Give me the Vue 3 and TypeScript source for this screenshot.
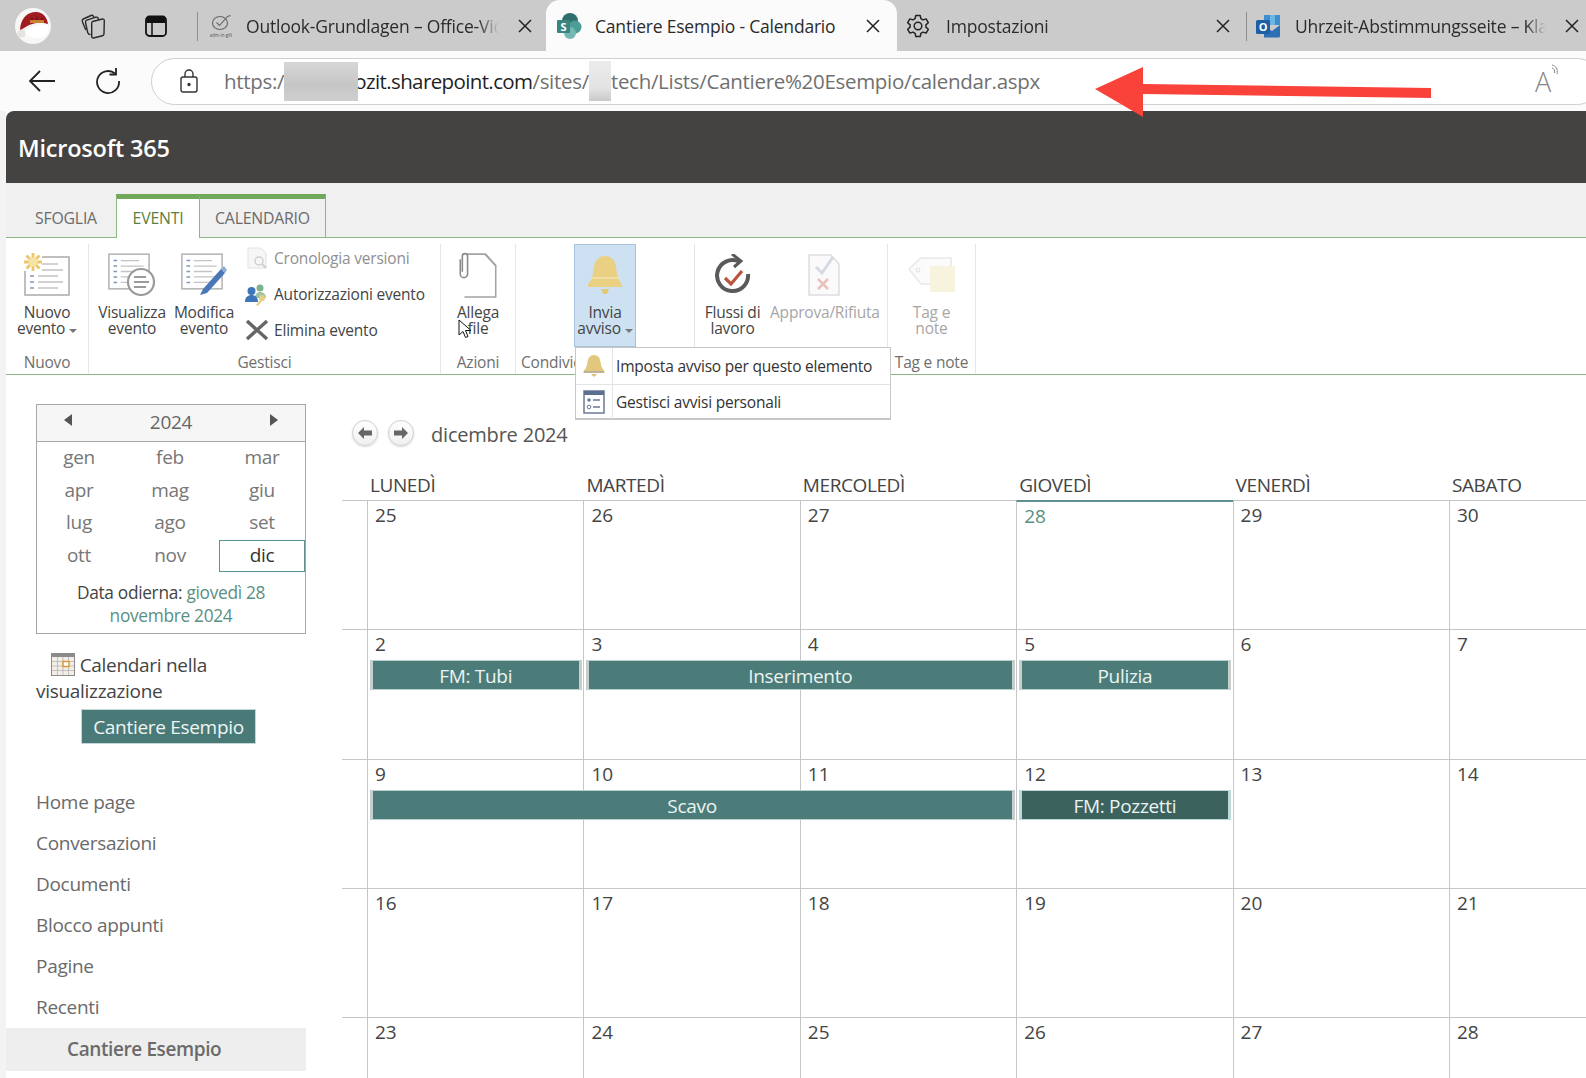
<script setup lang="ts">
interface CalEvent {
  title: string;
  from: number;
  to: number;
  dark?: boolean;
}

interface Week {
  days: number[];
  events: CalEvent[];
}

const months = ["gen", "feb", "mar", "apr", "mag", "giu", "lug", "ago", "set", "ott", "nov", "dic"];
const dayNames = ["LUNEDÌ", "MARTEDÌ", "MERCOLEDÌ", "GIOVEDÌ", "VENERDÌ", "SABATO"];
const navLinks = ["Home page", "Conversazioni", "Documenti", "Blocco appunti", "Pagine", "Recenti"];

const weeks: Week[] = [
  { days: [25, 26, 27, 28, 29, 30], events: [] },
  {
    days: [2, 3, 4, 5, 6, 7],
    events: [
      { title: "FM: Tubi", from: 1, to: 2 },
      { title: "Inserimento", from: 2, to: 4 },
      { title: "Pulizia", from: 4, to: 5 },
    ],
  },
  {
    days: [9, 10, 11, 12, 13, 14],
    events: [
      { title: "Scavo", from: 1, to: 4 },
      { title: "FM: Pozzetti", from: 4, to: 5, dark: true },
    ],
  },
  { days: [16, 17, 18, 19, 20, 21], events: [] },
  { days: [23, 24, 25, 26, 27, 28], events: [] },
];
</script>

<template>
  <div class="page">
    <svg class="defs" width="0" height="0">
      <symbol id="listdoc" viewBox="0 0 46 40">
        <rect x="1" y="1" width="44" height="38" fill="#fff" stroke="#b0b0b0" stroke-width="1.6" />
        <g stroke="#c4c4c4" stroke-width="1.4">
          <path d="M14 8h20M14 14h25M14 20h20M14 26h25M14 32h20" />
        </g>
        <g stroke="#7f98b8" stroke-width="1.6">
          <path d="M6 8h4M6 14h4M6 20h4M6 26h4M6 32h4" />
        </g>
      </symbol>
    </svg>

    <!-- browser chrome -->
    <div class="tabstrip">
      <div class="strip-left">
        <svg class="avatar" width="36" height="36" viewBox="0 0 36 36">
          <circle cx="18" cy="18" r="18" fill="#f9f7f6" />
          <path d="M5 23C5 11 12 4 21 4c7 0 11 5 12 12-9-3-19-1-28 7z" fill="#a01c20" />
          <path d="M15 12h14v3H15z" fill="#c9822e" />
          <path d="M17 9l2 3h-4zM22 8l2 4h-4zM27 9l2 3h-4z" fill="#7d1417" />
          <path d="M9 24c5-5 15-8 24-7 2 7-2 13-9 13-7 0-12-2-15-6z" fill="#fff" />
          <circle cx="6.500" cy="25.500" r="4" fill="#e6e2e0" />
        </svg>
        <svg class="chrome-ic" width="26" height="26" viewBox="0 0 26 26" fill="none" stroke="#2a2a2a" stroke-width="1.400" stroke-linejoin="round">
          <path d="M12.500 8.500l10-2.500a1.500 1.500 0 0 1 1.800 1.300l-.3 13.500a2 2 0 0 1-1.500 1.900l-9 2.300a1.500 1.500 0 0 1-1.800-1.400V10.500a2 2 0 0 1 .8-2z" />
          <path d="M10.500 21.500c-1 0-2.500-1-2.800-2L5.500 9.500a2 2 0 0 1 1.300-2.300l9-3a2 2 0 0 1 2.300 1l.7 1.600" />
          <path d="M5.800 17L2.300 8.500a2 2 0 0 1 1-2.500l7.700-3.500a2 2 0 0 1 2.500.8l.5 1" />
        </svg>
        <svg class="chrome-ic tabs-ic" width="24" height="24" viewBox="0 0 24 24" fill="none" stroke="#111" stroke-width="1.800">
          <rect x="2" y="2.500" width="20" height="19.500" rx="3.500" />
          <path d="M2.500 6h19" stroke-width="6" />
          <path d="M8 8v13.500" stroke-width="1.500" />
        </svg>
      </div>

      <div class="tab tab-first">
        <svg width="22" height="28" viewBox="0 0 22 28" fill="none" stroke="#666" stroke-width="1.100">
          <ellipse cx="10" cy="11" rx="7.500" ry="6.500" />
          <path d="M6.500 10.500l3 3 8-9 3-1" />
          <text x="11" y="24.500" text-anchor="middle" class="fav-tiny">adm-in-gift</text>
        </svg>
        <span class="tab-title">Outlook-Grundlagen – Office-Video</span>
        <svg class="tab-x" width="14" height="14" viewBox="0 0 14 14" stroke="#222" stroke-width="1.500"><path d="M1 1l12 12M13 1L1 13" /></svg>
      </div>
      <div class="tab tab-active">
        <svg width="28" height="28" viewBox="0 0 28 28">
          <circle cx="15" cy="9" r="8" fill="#2f6f6d" />
          <circle cx="20" cy="15" r="6.500" fill="#4c9c97" />
          <circle cx="15" cy="21" r="6" fill="#74b8b3" />
          <rect x="2" y="8" width="13" height="13" rx="1" fill="#3a8580" />
          <text x="8.500" y="18.500" text-anchor="middle" class="fav-letter">S</text>
        </svg>
        <span class="tab-title tab-title-full">Cantiere Esempio - Calendario</span>
        <svg class="tab-x" width="14" height="14" viewBox="0 0 14 14" stroke="#222" stroke-width="1.500"><path d="M1 1l12 12M13 1L1 13" /></svg>
      </div>
      <div class="tab tab-settings">
        <svg width="26" height="26" viewBox="0 0 26 26" fill="none" stroke="#222" stroke-width="1.500">
          <circle cx="13" cy="13" r="3.800" />
          <path d="M10.800 2.500h4.400l.7 3.200 2.100 1.200 3.100-1 2.200 3.800-2.400 2.200v2.200l2.400 2.200-2.200 3.800-3.100-1-2.100 1.200-.7 3.200h-4.400l-.7-3.200-2.100-1.200-3.100 1-2.200-3.800 2.400-2.200v-2.200L2.700 9.700l2.200-3.800 3.100 1 2.100-1.200z" stroke-linejoin="round" />
        </svg>
        <span class="tab-title">Impostazioni</span>
        <svg class="tab-x" width="14" height="14" viewBox="0 0 14 14" stroke="#222" stroke-width="1.500"><path d="M1 1l12 12M13 1L1 13" /></svg>
      </div>
      <div class="tab tab-last">
        <svg width="26" height="28" viewBox="0 0 26 28">
          <path d="M9 3h16v10H9z" fill="#3f8fd0" />
          <path d="M15 3h5v10h-5z" fill="#6cb6e6" />
          <path d="M9 14l8 5 8-6v11a1.500 1.500 0 0 1-1.500 1.500H9z" fill="#2f6fb4" />
          <rect x="1" y="8" width="14" height="14" rx="1.500" fill="#1c5fa5" />
          <text x="8" y="19" text-anchor="middle" class="fav-letter">O</text>
        </svg>
        <span class="tab-title">Uhrzeit-Abstimmungsseite – Klassenbuch</span>
        <svg class="tab-x" width="14" height="14" viewBox="0 0 14 14" stroke="#222" stroke-width="1.500"><path d="M1 1l12 12M13 1L1 13" /></svg>
      </div>
    </div>

    <div class="toolbar">
      <svg class="tb-back" width="28" height="24" viewBox="0 0 28 24" fill="none" stroke="#222" stroke-width="1.800">
        <path d="M27 12H2M12 2L2 12l10 10" />
      </svg>
      <svg class="tb-reload" width="26" height="26" viewBox="0 0 26 26" fill="none" stroke="#222" stroke-width="1.800">
        <path d="M20 5.500A11 11 0 1 0 24 13" />
        <path d="M21 0v6.500h-6.500" />
      </svg>
      <div class="address">
        <svg class="lock" width="18" height="24" viewBox="0 0 18 24" fill="none" stroke="#333" stroke-width="1.400">
          <rect x="1" y="8" width="16" height="15" rx="2" />
          <path d="M5 8V5a4 4 0 0 1 8 0v3" />
          <circle cx="9" cy="15.500" r="1" fill="#333" />
        </svg>
        <span class="url url-dim">https:/</span>
        <span class="blur blur-a"></span>
        <span class="url url-host">ozit.sharepoint.com</span>
        <span class="url url-dim">/sites/</span>
        <span class="blur blur-b"></span>
        <span class="url url-dim">tech/Lists/Cantiere%20Esempio/calendar.aspx</span>
        <span class="read-aloud">A<svg width="10" height="16" viewBox="0 0 10 16" fill="none" stroke="#888" stroke-width="1"><path d="M1 2c4 1 6 4 5 9M1 5c2 .5 3 2 2.500 5" /></svg></span>
      </div>
    </div>

    <svg class="red-arrow" width="350" height="50" viewBox="0 0 350 50">
      <path d="M0 22L48 0v17l288 4v10L48 27v23z" fill="#f8423a" />
    </svg>

    <div class="site">
      <div class="suitebar">Microsoft 365</div>

      <div class="ribtabs">
        <div class="ribtab ribtab-plain">SFOGLIA</div>
        <div class="ribtab ribtab-on">EVENTI</div>
        <div class="ribtab ribtab-cal">CALENDARIO</div>
      </div>

      <!-- ribbon -->
      <div class="ribbon">
        <section class="rgroup g-nuovo">
          <div class="rbody">
            <div class="rbtn w-full">
              <div class="ricon">
                <svg width="46" height="44" viewBox="0 0 46 44">
                  <use href="#listdoc" x="0" y="3" width="46" height="40" />
                  <rect x="0" y="0" width="18" height="18" fill="#fff" />
                  <g stroke="#ecc667" stroke-width="2.800">
                    <path d="M9 0v18M0 9h18M2.500 2.500l13 13M15.500 2.500l-13 13" />
                  </g>
                  <circle cx="9" cy="9" r="4.500" fill="#f6e3a6" />
                </svg>
              </div>
              <div class="rtext">Nuovo<br />evento <i class="caret"></i></div>
            </div>
          </div>
          <div class="rlabel">Nuovo</div>
        </section>

        <section class="rgroup g-gestisci">
          <div class="rbody">
            <div class="rbtn w-72">
              <div class="ricon">
                <svg width="48" height="44" viewBox="0 0 48 44">
                  <use href="#listdoc" x="0" y="0" width="42" height="37" />
                  <circle cx="33" cy="29" r="13" fill="#fff" stroke="#9a9a9a" stroke-width="2.200" />
                  <path d="M26 24h12M26 29h15M26 34h12" stroke="#9a9a9a" stroke-width="2" />
                </svg>
              </div>
              <div class="rtext">Visualizza<br />evento</div>
            </div>
            <div class="rbtn w-72">
              <div class="ricon">
                <svg width="46" height="44" viewBox="0 0 46 44">
                  <use href="#listdoc" x="0" y="0" width="42" height="37" />
                  <path d="M22 36l-3 6 7-2 18-20-4-4z" fill="#4a78b6" />
                  <path d="M40 16l4 4 2-3-3-4z" fill="#8eaed4" />
                </svg>
              </div>
              <div class="rtext">Modifica<br />evento</div>
            </div>
            <ul class="rsmall">
              <li class="faded">
                <svg width="24" height="24" viewBox="0 0 24 24" fill="none">
                  <path d="M3 2h13l5 5v15H3z" fill="#f6f6f6" stroke="#e2e2e2" />
                  <circle cx="14" cy="15" r="4" stroke="#d0d0d0" stroke-width="1.500" />
                  <path d="M17 18l4 4" stroke="#d0d0d0" stroke-width="2" />
                </svg>
                Cronologia versioni
              </li>
              <li>
                <svg width="24" height="24" viewBox="0 0 24 24">
                  <circle cx="15" cy="6" r="3.500" fill="#7fb28a" />
                  <path d="M10 16c0-4 2-6 5-6s6 2 6 6z" fill="#9cc4a3" />
                  <circle cx="6.500" cy="9" r="4" fill="#3d75b8" />
                  <path d="M0 20c0-5 3-7 6.500-7s6.500 2 6.500 7z" fill="#3d75b8" />
                  <circle cx="17" cy="16" r="3" fill="#e6cf86" />
                  <path d="M15 18l-4 5 2 1 4-5z" fill="#e6cf86" />
                </svg>
                Autorizzazioni evento
              </li>
              <li>
                <svg width="24" height="24" viewBox="0 0 24 24" fill="none" stroke="#666" stroke-width="3.400">
                  <path d="M2 3l20 18M22 3L2 21" />
                </svg>
                Elimina evento
              </li>
            </ul>
          </div>
          <div class="rlabel">Gestisci</div>
        </section>

        <section class="rgroup g-azioni">
          <div class="rbody">
            <div class="rbtn w-full">
              <div class="ricon">
                <svg width="40" height="48" viewBox="0 0 38 46" fill="none">
                  <path d="M6 3h20l10 11v30H6" fill="#fff" stroke="#a3a3a3" stroke-width="1.500" />
                  <path d="M26 3l10 11" stroke="#a3a3a3" stroke-width="1.500" />
                  <path d="M2 8v14a3.500 3.500 0 0 0 7 0V5a2.500 2.500 0 0 0-5 0v15" stroke="#8a8a8a" stroke-width="1.500" fill="#fff" />
                </svg>
              </div>
              <div class="rtext">Allega<br />file</div>
            </div>
          </div>
          <div class="rlabel">Azioni</div>
          <svg class="cursor" width="14" height="20" viewBox="0 0 14 20">
            <path d="M1 1v15l4-3.500 2.500 6 2.500-1-2.500-6H13z" fill="#fff" stroke="#111" stroke-width="1" />
          </svg>
        </section>

        <section class="rgroup g-condividi">
          <div class="rbody">
            <div class="rbtn rbtn-open">
              <div class="ricon">
                <svg width="36" height="42" viewBox="0 0 36 42">
                  <path d="M18 2c-6 0-10 4-11 11-1 8-2 13-6 17v3h34v-3c-4-4-5-9-6-17C28 6 24 2 18 2z" fill="#e9d083" />
                  <path d="M14 35h8l-2 5h-4z" fill="#e3ca7a" />
                  <path d="M4 24h28" stroke="#f2e2ae" stroke-width="1.500" />
                </svg>
              </div>
              <div class="rtext">Invia<br />avviso <i class="caret"></i></div>
            </div>
          </div>
          <div class="rlabel rlabel-left">Condividi e tieni traccia</div>

          <div class="alert-menu">
            <div class="alert-row">
              <div class="alert-ic">
                <svg width="22" height="24" viewBox="0 0 22 24">
                  <path d="M11 1C7 1 5 4 4.500 8c-.5 4-1.500 7-4 9v2h21v-2c-2.500-2-3.500-5-4-9C17 4 15 1 11 1z" fill="#e3c77c" />
                  <path d="M1 17h20v2H1z" fill="#bdb39a" />
                  <path d="M8 20h6l-3 3z" fill="#dcbd68" />
                </svg>
              </div>
              <span>Imposta avviso per questo elemento</span>
            </div>
            <div class="alert-row">
              <div class="alert-ic">
                <svg width="22" height="24" viewBox="0 0 22 24" fill="none">
                  <rect x="1" y="1" width="20" height="22" fill="#fff" stroke="#6c7a94" stroke-width="1.500" />
                  <path d="M1 1h20v4H1z" fill="#5d6f90" />
                  <circle cx="6" cy="10" r="1.800" fill="#6c7a94" />
                  <circle cx="6" cy="17" r="1.800" stroke="#6c7a94" />
                  <path d="M10 10h7M10 17h7" stroke="#6c7a94" stroke-width="1.500" />
                </svg>
              </div>
              <span>Gestisci avvisi personali</span>
            </div>
          </div>
        </section>

        <section class="rgroup g-flussi">
          <div class="rbody">
            <div class="rbtn w-75">
              <div class="ricon">
                <svg width="38" height="42" viewBox="0 0 38 42" fill="none">
                  <path d="M25 7.500A15.500 15.500 0 1 0 34 20" stroke="#5a5a5a" stroke-width="4" />
                  <path d="M18 0l9 7-7 6" stroke="#5a5a5a" stroke-width="3" />
                  <path d="M11 24l6 6 11-13" stroke="#b9553c" stroke-width="3.200" />
                </svg>
              </div>
              <div class="rtext">Flussi di<br />lavoro</div>
            </div>
            <div class="rbtn w-108 faded-btn">
              <div class="ricon">
                <svg width="34" height="44" viewBox="0 0 34 44" fill="none">
                  <path d="M2 2h22l8 9v31H2z" fill="#fafafa" stroke="#dedede" stroke-width="1.500" />
                  <path d="M9 14l6 6 11-16" stroke="#d4dae3" stroke-width="3" />
                  <path d="M11 26l10 10M21 26L11 36" stroke="#e8c2ba" stroke-width="2.500" />
                </svg>
              </div>
              <div class="rtext">Approva/Rifiuta</div>
            </div>
          </div>
          <div class="rlabel"></div>
        </section>

        <section class="rgroup g-tag">
          <div class="rbody">
            <div class="rbtn w-full faded-btn">
              <div class="ricon">
                <svg width="48" height="38" viewBox="0 0 48 38" fill="none">
                  <path d="M1 13L13 2h30v26H13z" fill="#fbfbfb" stroke="#e8e8e8" stroke-width="1.500" />
                  <circle cx="10" cy="14" r="2" stroke="#e0e0e0" />
                  <rect x="22" y="10" width="25" height="26" fill="#f8f3dc" />
                </svg>
              </div>
              <div class="rtext">Tag e<br />note</div>
            </div>
          </div>
          <div class="rlabel">Tag e note</div>
        </section>
      </div>

      <div class="content">
        <aside class="side">
          <div class="mini">
            <div class="mini-head">
              <i class="tri tri-l"></i>
              <span>2024</span>
              <i class="tri tri-r"></i>
            </div>
            <div class="mini-grid">
              <div v-for="m in months" :key="m" class="mini-m" :class="{ 'mini-cur': m === 'dic' }">{{ m }}</div>
            </div>
            <div class="mini-foot">Data odierna: <span class="teal">giovedì 28<br />novembre 2024</span></div>
          </div>

          <div class="in-view">
            <svg width="24" height="23" viewBox="0 0 24 23">
              <rect width="24" height="23" fill="#8b8b8b" />
              <rect x="1" y="4" width="22" height="18" fill="#f3efe6" />
              <path d="M1 8.500h22M1 13h22M1 17.500h22M6.500 4v18M12 4v18M17.500 4v18" stroke="#b5b5b5" stroke-width=".8" />
              <rect x="12" y="8.500" width="6" height="5" fill="#fff" stroke="#d69a3c" stroke-width="1.500" />
            </svg>
            Calendari nella visualizzazione
          </div>
          <div class="cal-chip">Cantiere Esempio</div>

          <nav class="nav">
            <a v-for="link in navLinks" :key="link" class="nav-item">{{ link }}</a>
            <a class="nav-item nav-cur">Cantiere Esempio</a>
          </nav>
        </aside>

        <main class="cal">
          <div class="cal-title">
            <button class="circ">
              <svg width="14" height="12" viewBox="0 0 14 12"><path d="M0 6l6-6v3.500h8v5H6V12z" fill="#666" /></svg>
            </button>
            <button class="circ">
              <svg width="14" height="12" viewBox="0 0 14 12"><path d="M14 6L8 0v3.500H0v5h8V12z" fill="#666" /></svg>
            </button>
            <span class="cal-month">dicembre 2024</span>
          </div>

          <div class="cal-head">
            <div class="gutter"></div>
            <div v-for="name in dayNames" :key="name" class="cal-dname">{{ name }}</div>
          </div>

          <div v-for="(week, w) in weeks" :key="w" class="week">
            <div
              v-for="(day, d) in week.days"
              :key="d"
              class="day"
              :class="{ today: w === 0 && d === 3 }"
              :style="{ gridColumn: d + 2 }"
            >{{ day }}</div>
            <div
              v-for="ev in week.events"
              :key="ev.title"
              class="event"
              :class="{ 'event-dark': ev.dark }"
              :style="{ gridColumn: `${ev.from + 1} / ${ev.to + 1}` }"
            >{{ ev.title }}</div>
          </div>
        </main>
      </div>
    </div>
  </div>
</template>

<style>
html,
body {
  margin: 0;
  background: #f3f3f3;
  overflow: hidden;
}
</style>

<style scoped>
.page {
  position: relative;
  width: 1586px;
  height: 1078px;
  overflow: hidden;
  font-family: "Open Sans", "Noto Sans", sans-serif;
  color: #444;
}

.defs {
  position: absolute;
}

/* browser chrome */
.tabstrip {
  display: flex;
  height: 51px;
  background: #cbcbcb;
}

.strip-left {
  display: flex;
  align-items: center;
  width: 197px;
  padding-left: 15px;
  box-sizing: border-box;
  flex: none;
}

.chrome-ic {
  margin-left: 29px;
}

.tabs-ic {
  margin-left: 38px;
}

.tab {
  display: flex;
  align-items: center;
  box-sizing: border-box;
  height: 51px;
  flex: none;
  font-size: 17.500px;
  letter-spacing: -0.2px;
  color: #2b2b2b;
}

.tab-first {
  width: 349px;
  padding: 0 14px 0 13px;
  gap: 14px;
  position: relative;
}

.tab-first::before,
.tab-last::before {
  content: "";
  position: absolute;
  left: 0;
  top: 12px;
  bottom: 10px;
  width: 1px;
  background: #8e8e8e;
}

.tab-active {
  width: 351px;
  padding: 0 17px 0 9px;
  gap: 12px;
  background: #fbfbfb;
  border-radius: 14px 14px 0 0;
}

.tab-settings {
  width: 349px;
  padding: 0 16px 0 8px;
  gap: 15px;
}

.tab-last {
  width: 340px;
  padding: 0 7px 0 9px;
  gap: 14px;
  position: relative;
}

.tab-title {
  flex: 1;
  min-width: 0;
  white-space: nowrap;
  overflow: hidden;
  -webkit-mask-image: linear-gradient(to right, #000 90%, transparent 98%);
  mask-image: linear-gradient(to right, #000 90%, transparent 98%);
}

.tab-title-full {
  -webkit-mask-image: none;
  mask-image: none;
}

.tab-x {
  flex: none;
}

.fav-letter {
  font-size: 11px;
  font-weight: 700;
  fill: #fff;
  stroke: none;
}

.fav-tiny {
  font-size: 4.500px;
  fill: #555;
  stroke: none;
  letter-spacing: 0;
}

.toolbar {
  display: flex;
  align-items: center;
  height: 60px;
  background: #fbfbfb;
}

.tb-back {
  margin-left: 28px;
  flex: none;
}

.tb-reload {
  margin-left: 39px;
  flex: none;
}

.address {
  display: flex;
  align-items: center;
  flex: none;
  box-sizing: border-box;
  width: 1450px;
  height: 47px;
  margin: 0 0 0 30px;
  padding-left: 28px;
  background: #fff;
  border: 1px solid #cfcfcf;
  border-radius: 24px;
  font-size: 20.500px;
  letter-spacing: -0.3px;
}

.lock {
  margin-right: 26px;
  flex: none;
}

.url {
  white-space: nowrap;
}

.url-dim {
  color: #707070;
}

.url-host {
  color: #1f1f1f;
  margin-left: -4px;
  letter-spacing: -0.62px;
}

.blur {
  flex: none;
  background: linear-gradient(#d6d6d6, #c6c6c6 60%, #cfcfcf);
  position: relative;
  z-index: 1;
}

.blur-a {
  width: 74px;
  height: 39px;
}

.blur-b {
  width: 22px;
  height: 40px;
  background: linear-gradient(#ececec, #e2e2e2 70%, #c8c8c8);
}

.read-aloud {
  display: flex;
  margin-left: auto;
  margin-right: 39px;
  color: #888;
  font-size: 27px;
  font-weight: 300;
}

.red-arrow {
  position: absolute;
  left: 1095px;
  top: 67px;
  z-index: 3;
}

/* sharepoint page */
.site {
  margin-left: 6px;
  background: #fff;
}

.suitebar {
  height: 72px;
  line-height: 74px;
  padding-left: 12px;
  background: #444341;
  border-radius: 8px 0 0 0;
  color: #fff;
  font-size: 23.500px;
  font-weight: 600;
  letter-spacing: -0.2px;
}

.ribtabs {
  display: flex;
  align-items: flex-end;
  box-sizing: border-box;
  height: 55px;
  padding-left: 14px;
  background: #f0f0f0;
  border-bottom: 1px solid #8db883;
  font-size: 15.800px;
  letter-spacing: -0.2px;
}

.ribtab {
  box-sizing: border-box;
  height: 44px;
  line-height: 38px;
  text-align: center;
  color: #6b6b6b;
  margin-bottom: -1px;
}

.ribtab-plain {
  width: 96px;
  padding-right: 4px;
  line-height: 48px;
}

.ribtab-on {
  width: 84px;
  background: #fff;
  color: #5b8040;
  border-top: 5px solid #70a85c;
  border-left: 1px solid #8db883;
  border-right: 1px solid #8db883;
}

.ribtab-cal {
  width: 126px;
  border-top: 5px solid #70a85c;
  border-right: 1px solid #8db883;
  border-bottom: 1px solid #8db883;
}

.ribbon {
  display: flex;
  box-sizing: border-box;
  height: 137px;
  padding-top: 6px;
  border-bottom: 1px solid #8db883;
  background: #fff;
  font-size: 15.500px;
  letter-spacing: -0.2px;
}

.rgroup {
  position: relative;
  box-sizing: border-box;
  border-right: 1px solid #e6e6e6;
  flex: none;
  display: flex;
  flex-direction: column;
}

.g-nuovo {
  width: 83px;
}

.g-gestisci {
  width: 352px;
}

.g-azioni {
  width: 75px;
}

.g-condividi {
  width: 179px;
}

.g-flussi {
  width: 193px;
}

.g-tag {
  width: 88px;
}

.rbody {
  display: flex;
  height: 102px;
  box-sizing: border-box;
}

.g-gestisci .rbody {
  padding-left: 7px;
}

.g-condividi .rbody {
  justify-content: center;
}

.rbtn {
  box-sizing: border-box;
  height: 102px;
  padding-top: 6px;
  text-align: center;
  color: #444;
  flex: none;
}

.w-full {
  width: 100%;
}

.w-72 {
  width: 72px;
}

.w-75 {
  width: 75px;
}

.w-108 {
  width: 108px;
}

.rbtn-open {
  width: 62px;
  height: 103px;
  padding-top: 5px;
  background: #cde1f2;
  border: 1px solid #a9c3dc;
}

.ricon {
  display: flex;
  align-items: center;
  justify-content: center;
  height: 50px;
}

.rtext {
  margin-top: 4px;
  line-height: 16px;
  white-space: nowrap;
}

.faded-btn .rtext {
  color: #a6a6a6;
}

.caret {
  display: inline-block;
  border-top: 4px solid #777;
  border-left: 4px solid transparent;
  border-right: 4px solid transparent;
  vertical-align: 1px;
}

.rsmall {
  list-style: none;
  margin: -4px 0 0;
  padding: 0 0 0 5px;
}

.rsmall li {
  display: flex;
  align-items: center;
  gap: 5px;
  height: 36px;
  white-space: nowrap;
}

.rsmall .faded {
  color: #8f8f8f;
}

.rlabel {
  flex: 1;
  text-align: center;
  line-height: 32px;
  color: #6f6f6f;
}

.rlabel-left {
  text-align: left;
  padding-left: 5px;
  white-space: nowrap;
  overflow: hidden;
}

.cursor {
  position: absolute;
  left: 17px;
  top: 75px;
}

.alert-menu {
  position: absolute;
  left: 59px;
  top: 103px;
  z-index: 2;
  width: 316px;
  height: 73px;
  box-sizing: border-box;
  background: #fff;
  border: 1px solid #c6c6c6;
  border-bottom-width: 2px;
  color: #333;
}

.alert-row {
  display: flex;
  align-items: center;
  height: 36px;
  box-sizing: border-box;
  white-space: nowrap;
}

.alert-row + .alert-row {
  border-top: 1px solid #e3e3e3;
  padding-bottom: 1px;
}

.alert-ic {
  display: flex;
  align-items: center;
  justify-content: center;
  width: 36px;
  height: 100%;
  margin-right: 3px;
  border-right: 1px solid #e3e3e3;
  flex: none;
}

/* content */
.content {
  display: flex;
}

.side {
  width: 336px;
  flex: none;
  box-sizing: border-box;
  padding: 29px 0 0 30px;
  font-size: 19px;
  letter-spacing: -0.3px;
}

.mini {
  box-sizing: border-box;
  width: 270px;
  height: 230px;
  border: 1px solid #a6a6a6;
  color: #777;
}

.mini-head {
  display: flex;
  align-items: center;
  justify-content: space-between;
  box-sizing: border-box;
  height: 37px;
  padding: 0 27px;
  background: #f6f6f6;
  border-bottom: 1px solid #a6a6a6;
  color: #666;
}

.mini-head span {
  margin-top: -2px;
}

.tri {
  width: 0;
  height: 0;
  margin-top: -6px;
  border-top: 6px solid transparent;
  border-bottom: 6px solid transparent;
}

.tri-l {
  border-right: 8px solid #555;
}

.tri-r {
  border-left: 8px solid #555;
}

.mini-grid {
  display: grid;
  grid-template-columns: 84px 98px 86px;
  grid-auto-rows: 32.500px;
}

.mini-m {
  text-align: center;
  line-height: 30px;
  box-sizing: border-box;
}

.mini-cur {
  border: 1px solid #5f9090;
  color: #333;
  line-height: 28px;
}

.mini-foot {
  padding-top: 9px;
  font-size: 17.300px;
  line-height: 23px;
  text-align: center;
  color: #444;
}

.teal {
  color: #5a8f84;
}

.in-view {
  margin-top: 18px;
  width: 270px;
  line-height: 26px;
  color: #444;
}

.in-view svg {
  margin-left: 15px;
  vertical-align: -4px;
}

.cal-chip {
  width: 175px;
  height: 35px;
  margin: 5px 0 0 45px;
  box-sizing: border-box;
  border: 1px solid #c6d6d6;
  background: #4a7a78;
  color: #eef6f4;
  line-height: 34px;
  text-align: center;
}

.nav {
  display: flex;
  flex-direction: column;
  margin-top: 39px;
  color: #6a6a6a;
}

.nav-item {
  height: 41px;
  line-height: 38px;
}

.nav-cur {
  width: 300px;
  height: 43px;
  margin: -1px 0 0 -30px;
  padding-left: 61px;
  box-sizing: border-box;
  background: #eeeeee;
  font-weight: 600;
  line-height: 42px;
  letter-spacing: -0.4px;
}

.cal {
  flex: 1;
  min-width: 0;
  overflow: hidden;
}

.cal-title {
  display: flex;
  align-items: center;
  height: 26px;
  margin-top: 45px;
  padding-left: 10px;
  gap: 10px;
}

.circ {
  display: flex;
  align-items: center;
  justify-content: center;
  width: 26px;
  height: 26px;
  padding: 0;
  border: 1px solid #cfcfcf;
  border-radius: 50%;
  background: linear-gradient(#fff, #f0f0f0);
  box-shadow: 0 1px 2px rgba(0, 0, 0, 0.15);
}

.cal-month {
  margin: 2px 0 0 7px;
  font-size: 20px;
  letter-spacing: -0.2px;
  color: #555;
}

.cal-head,
.week {
  display: grid;
  grid-template-columns: 25px repeat(6, 216.400px);
}

.cal-head {
  height: 30px;
  margin-top: 24px;
  line-height: 30px;
  font-size: 19px;
  letter-spacing: -0.4px;
  color: #444;
  border-bottom: 1px solid #c6c6c6;
  box-sizing: content-box;
}

.cal-dname {
  padding-left: 3px;
}

.week {
  height: 129.300px;
  box-sizing: border-box;
  border-bottom: 1px solid #c6c6c6;
}

.day {
  grid-row: 1;
  border-left: 1px solid #c6c6c6;
  padding: 1px 0 0 7px;
  font-size: 19px;
  line-height: 27px;
  color: #444;
}

.today {
  color: #5a8f84;
  border-top: 2px solid #5f9090;
  margin-top: -1px;
}

.event {
  grid-row: 1;
  align-self: start;
  box-sizing: border-box;
  height: 30px;
  margin: 30px 1.500px 0 2.500px;
  background: #4c7c79;
  border-left: 3px solid #c6cfce;
  border-right: 3px solid #c6cfce;
  border-top: 1px solid #b9d0ce;
  border-bottom: 1px solid #b9d0ce;
  color: #eaf4f2;
  font-size: 19px;
  line-height: 30px;
  letter-spacing: -0.3px;
  text-align: center;
  white-space: nowrap;
}

.event-dark {
  background: #3c625e;
  border-color: #bcd8d8;
}
</style>
